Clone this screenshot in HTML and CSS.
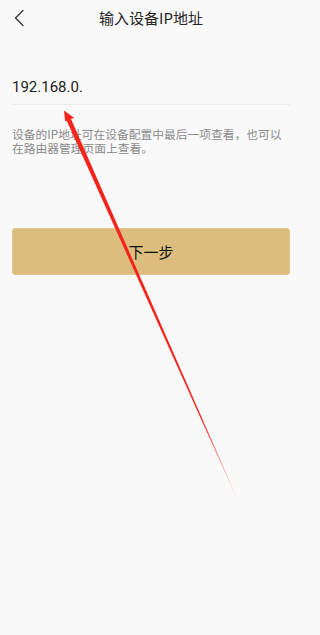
FILE: index.html
```html
<!DOCTYPE html>
<html lang="zh-CN">
<head>
<meta charset="utf-8">
<title>输入设备IP地址</title>
<link rel="stylesheet" href="styles.css">
</head>
<body>
<div class="page">
  <header class="topbar">
    <span class="back">
      <svg width="12" height="18" viewBox="0 0 12 18"><path d="M9 1.5 L1.5 9 L9 16.5" fill="none" stroke="#333" stroke-width="1.3" stroke-linecap="round" stroke-linejoin="round"/></svg>
    </span>
    <h1 class="title">输入设备IP地址</h1>
    <span class="spacer"></span>
  </header>
  <main class="content">
    <div class="field">192.168.0.</div>
    <p class="hint">设备的IP地址可在设备配置中最后一项查看，也可以在路由器管理页面上查看。</p>
    <button class="next">下一步</button>
  </main>
  <svg class="annot" width="302" height="635" viewBox="0 0 302 635">
    <defs>
      <linearGradient id="fade" gradientUnits="userSpaceOnUse" x1="68" y1="119" x2="239" y2="503">
        <stop offset="0" stop-color="#f6231a" stop-opacity="1"/>
        <stop offset="0.78" stop-color="#f6231a" stop-opacity="1"/>
        <stop offset="1" stop-color="#f6231a" stop-opacity="0"/>
      </linearGradient>
    </defs>
    <polygon points="70.6,118.1 66.4,119.9 238.8,503.1 239.2,502.9" fill="url(#fade)"/>
    <polygon points="64,110.5 74.2,118 69.5,119.2 65.2,121.6" fill="#f6231a"/>
  </svg>
</div>
</body>
</html>
```

FILE: styles.css
```css
* { box-sizing: border-box; }
html, body {
  margin: 0;
  padding: 0;
  background: #f9f9f9;
}
body {
  font-family: "Noto Sans CJK SC", "Noto Sans", Roboto, sans-serif;
  color: #222;
}
.page {
  position: relative;
  width: 302px;
  height: 635px;
  overflow: hidden;
}
.topbar {
  height: 35px;
  display: flex;
  align-items: center;
}
.back {
  width: 40px;
  display: flex;
  align-items: center;
  padding-left: 14px;
  height: 35px;
}
.back svg { display: block; }
.spacer { width: 40px; }
.title {
  flex: 1;
  margin: 0;
  text-align: center;
  font-size: 15px;
  font-weight: 400;
  color: #262626;
  line-height: 20px;
}
.content {
  padding: 0 12px;
}
.field {
  padding: 42px 0 7px;
  font-family: Roboto, "Noto Sans", sans-serif;
  font-size: 15px;
  line-height: 20px;
  color: #222;
  border-bottom: 1px solid #ebebeb;
}
.hint {
  margin: 22px 0 0;
  font-size: 11.75px;
  line-height: 14px;
  color: #8a8a8a;
}
.next {
  display: block;
  width: 100%;
  height: 47px;
  margin-top: 73px;
  border: 1px solid #e2c68d;
  border-radius: 3px;
  background: #dcbd7e;
  font-family: "Noto Sans CJK SC", sans-serif;
  font-size: 15px;
  color: #111;
  padding: 0;
}
.annot {
  position: absolute;
  top: 0;
  left: 0;
  pointer-events: none;
}
```
